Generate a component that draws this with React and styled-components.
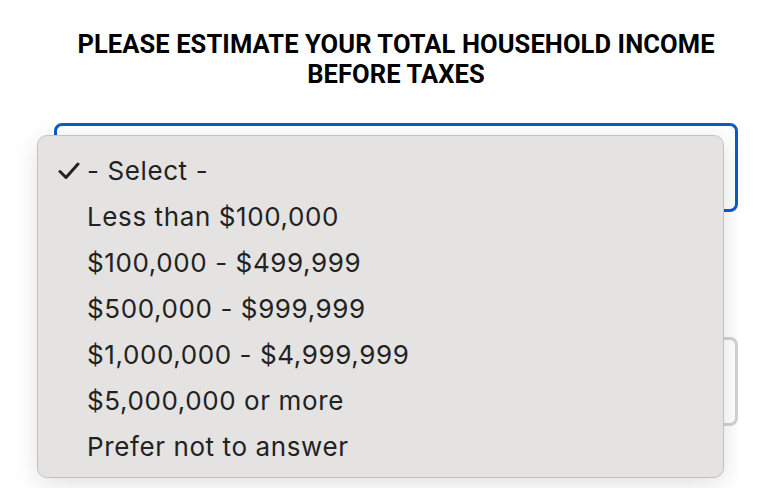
import React from "react";
import styled, { createGlobalStyle } from "styled-components";

const GlobalStyle = createGlobalStyle`
  html, body {
    margin: 0;
    padding: 0;
    background: #ffffff;
  }
  body {
    font-family: Inter, "Liberation Sans", sans-serif;
  }
`;

const options = [
  "- Select -",
  "Less than $100,000",
  "$100,000 - $499,999",
  "$500,000 - $999,999",
  "$1,000,000 - $4,999,999",
  "$5,000,000 or more",
  "Prefer not to answer",
];

function CheckIcon() {
  return (
    <svg width="22" height="18" viewBox="0 0 22 18">
      <path
        d="M2 9.5 L8 15.5 L20 2"
        fill="none"
        stroke="#222"
        strokeWidth="3"
        strokeLinecap="round"
        strokeLinejoin="round"
      />
    </svg>
  );
}

function App() {
  return (
    <>
      <GlobalStyle />
      <Page>
        <Title>
          PLEASE ESTIMATE YOUR TOTAL HOUSEHOLD INCOME
          <br />
          BEFORE TAXES
        </Title>
        <Field focused />
        <Field />
        <Menu>
          {options.map((opt, i) => (
            <Item key={opt}>
              <Check>{i === 0 && <CheckIcon />}</Check>
              {opt}
            </Item>
          ))}
        </Menu>
      </Page>
    </>
  );
}

const Page = styled.div`
  position: relative;
  width: 738px;
  height: 488px;
  padding: 29px 0 0 54px;
  box-sizing: border-box;
  display: flex;
  flex-direction: column;
  overflow: hidden;
`;

const Title = styled.h1`
  margin: 0 0 34px;
  font-family: Roboto, "Liberation Sans", sans-serif;
  font-weight: 700;
  font-size: 25.5px;
  letter-spacing: 0.1px;
  line-height: 30px;
  text-align: center;
  white-space: nowrap;
  color: #000;
`;

const Field = styled.div`
  height: 89px;
  flex-shrink: 0;
  box-sizing: border-box;
  border: ${(p) => (p.focused ? "3px solid #0a5ccb" : "3px solid #d2d2d2")};
  border-radius: 8px;
  margin-bottom: ${(p) => (p.focused ? "125px" : "0")};
  background: #fff;
`;

const Menu = styled.div`
  position: absolute;
  left: 37px;
  top: 135px;
  width: 687px;
  height: 343px;
  box-sizing: border-box;
  padding: 11px 0 0;
  background: #e4e3e2;
  border: 1px solid #c3c2c1;
  border-radius: 10px;
  box-shadow: 0 6px 24px rgba(0, 0, 0, 0.12);
`;

const Item = styled.div`
  display: flex;
  align-items: center;
  height: 46px;
  padding-left: 20px;
  font-size: 26px;
  letter-spacing: 0.6px;
  color: #222;
`;

const Check = styled.span`
  display: inline-flex;
  align-items: center;
  width: 29px;
  height: 100%;
  padding-top: 1px;
  box-sizing: border-box;
`;

export default App;
